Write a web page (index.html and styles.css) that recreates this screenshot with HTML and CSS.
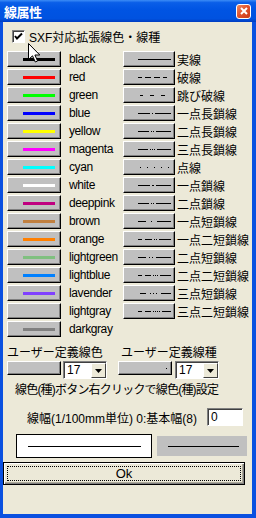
FILE: index.html
```html
<!DOCTYPE html>
<html lang="ja">
<head>
    <meta charset="UTF-8">
    <title>線属性</title>
    <link rel="stylesheet" href="styles.css">
</head>
<body>
    <div class="window">
        <div class="titlebar">
            <span class="title">線属性</span>
            <span class="close">
                <svg width="8" height="8" viewBox="0 0 8 8"><path d="M1 1 L7 7 M7 1 L1 7" stroke="#fff" stroke-width="2"/></svg>
            </span>
        </div>
        <div class="body">
            <div class="check-row">
                <span class="checkbox">
                    <svg width="9" height="9" viewBox="0 0 9 9"><path d="M1 4 L3 6.5 L8 1.5" fill="none" stroke="#000" stroke-width="2"/></svg>
                </span>
                <span>SXF対応拡張線色・線種</span>
            </div>

            <div class="lists">
                <!-- colour buttons -->
                <div class="colors">
                    <div class="row"><button class="btn color-btn"><span class="swatch" style="background:#000000"></span></button><span class="name">black</span></div>
                    <div class="row"><button class="btn color-btn"><span class="swatch" style="background:#ff0000"></span></button><span class="name">red</span></div>
                    <div class="row"><button class="btn color-btn"><span class="swatch" style="background:#00ff00"></span></button><span class="name">green</span></div>
                    <div class="row"><button class="btn color-btn"><span class="swatch" style="background:#0000ff"></span></button><span class="name">blue</span></div>
                    <div class="row"><button class="btn color-btn"><span class="swatch" style="background:#ffff00"></span></button><span class="name">yellow</span></div>
                    <div class="row"><button class="btn color-btn"><span class="swatch" style="background:#ff00ff"></span></button><span class="name">magenta</span></div>
                    <div class="row"><button class="btn color-btn"><span class="swatch" style="background:#00ffff"></span></button><span class="name">cyan</span></div>
                    <div class="row"><button class="btn color-btn"><span class="swatch" style="background:#ffffff"></span></button><span class="name">white</span></div>
                    <div class="row"><button class="btn color-btn"><span class="swatch" style="background:#c00080"></span></button><span class="name">deeppink</span></div>
                    <div class="row"><button class="btn color-btn"><span class="swatch" style="background:#c08040"></span></button><span class="name">brown</span></div>
                    <div class="row"><button class="btn color-btn"><span class="swatch" style="background:#ff8000"></span></button><span class="name">orange</span></div>
                    <div class="row"><button class="btn color-btn"><span class="swatch" style="background:#80c080"></span></button><span class="name">lightgreen</span></div>
                    <div class="row"><button class="btn color-btn"><span class="swatch" style="background:#0080ff"></span></button><span class="name">lightblue</span></div>
                    <div class="row"><button class="btn color-btn"><span class="swatch" style="background:#8040ff"></span></button><span class="name">lavender</span></div>
                    <div class="row"><button class="btn color-btn"><span class="swatch" style="background:#c0c0c0"></span></button><span class="name">lightgray</span></div>
                    <div class="row"><button class="btn color-btn"><span class="swatch" style="background:#808080"></span></button><span class="name">darkgray</span></div>
                </div>

                <!-- line type buttons -->
                <div class="types">
                    <div class="row"><button class="btn type-btn"><svg width="33" height="1"><line x1="0" y1="0.5" x2="33" y2="0.5"/></svg></button><span class="name">実線</span></div>
                    <div class="row"><button class="btn type-btn"><svg width="33" height="1"><line x1="0" y1="0.5" x2="33" y2="0.5" stroke-dasharray="4 3 6 3 6 3 4"/></svg></button><span class="name">破線</span></div>
                    <div class="row"><button class="btn type-btn"><svg width="33" height="1"><line x1="0" y1="0.5" x2="33" y2="0.5" stroke-dasharray="3 7 4 7 4 6 2" stroke-dashoffset="-2"/></svg></button><span class="name">跳び破線</span></div>
                    <div class="row"><button class="btn type-btn"><svg width="33" height="1"><line x1="0" y1="0.5" x2="33" y2="0.5" stroke-dasharray="12 2 1 2 16"/></svg></button><span class="name">一点長鎖線</span></div>
                    <div class="row"><button class="btn type-btn"><svg width="33" height="1"><line x1="0" y1="0.5" x2="33" y2="0.5" stroke-dasharray="11 2 1 1 1 2 15"/></svg></button><span class="name">二点長鎖線</span></div>
                    <div class="row"><button class="btn type-btn"><svg width="33" height="1"><line x1="0" y1="0.5" x2="33" y2="0.5" stroke-dasharray="10 2 1 1 1 1 1 2 14"/></svg></button><span class="name">三点長鎖線</span></div>
                    <div class="row"><button class="btn type-btn"><svg width="33" height="1"><line x1="0" y1="0.5" x2="33" y2="0.5" stroke-dasharray="1 6" stroke-dashoffset="-2"/></svg></button><span class="name">点線</span></div>
                    <div class="row"><button class="btn type-btn"><svg width="33" height="1"><line x1="0" y1="0.5" x2="33" y2="0.5" stroke-dasharray="12 2 2 2 15"/></svg></button><span class="name">一点鎖線</span></div>
                    <div class="row"><button class="btn type-btn"><svg width="33" height="1"><line x1="0" y1="0.5" x2="33" y2="0.5" stroke-dasharray="11 2 1 1 1 2 15"/></svg></button><span class="name">二点鎖線</span></div>
                    <div class="row"><button class="btn type-btn"><svg width="33" height="1"><line x1="0" y1="0.5" x2="33" y2="0.5" stroke-dasharray="8 5 1 5 14"/></svg></button><span class="name">一点短鎖線</span></div>
                    <div class="row"><button class="btn type-btn"><svg width="33" height="1"><line x1="0" y1="0.5" x2="33" y2="0.5" stroke-dasharray="4 3 7 2 1 1 1 2 12"/></svg></button><span class="name">一点二短鎖線</span></div>
                    <div class="row"><button class="btn type-btn"><svg width="33" height="1"><line x1="0" y1="0.5" x2="33" y2="0.5" stroke-dasharray="8 3 1 2 1 3 15"/></svg></button><span class="name">二点短鎖線</span></div>
                    <div class="row"><button class="btn type-btn"><svg width="33" height="1"><line x1="0" y1="0.5" x2="33" y2="0.5" stroke-dasharray="4 3 6 2 1 1 1 1 1 2 12"/></svg></button><span class="name">二点二短鎖線</span></div>
                    <div class="row"><button class="btn type-btn"><svg width="33" height="1"><line x1="0" y1="0.5" x2="33" y2="0.5" stroke-dasharray="6 4 1 2 1 2 1 4 12" stroke-dashoffset="-2"/></svg></button><span class="name">三点短鎖線</span></div>
                    <div class="row"><button class="btn type-btn"><svg width="33" height="1"><line x1="0" y1="0.5" x2="33" y2="0.5" stroke-dasharray="4 3 6 2 1 1 1 1 1 1 1 2 12"/></svg></button><span class="name">三点二短鎖線</span></div>
                </div>
            </div>

            <div class="user-labels">
                <span class="user-label first">ユーザー定義線色</span>
                <span class="user-label">ユーザー定義線種</span>
            </div>
            <div class="user-row">
                <button class="btn user-btn"></button>
                <div class="combo"><span class="combo-value">17</span><span class="combo-arrow"><svg width="7" height="4" viewBox="0 0 7 4"><path d="M0 0 H7 L3.5 4 Z" fill="#000"/></svg></span></div>
                <button class="btn user-btn second"><span class="dot"></span></button>
                <div class="combo"><span class="combo-value">17</span><span class="combo-arrow"><svg width="7" height="4" viewBox="0 0 7 4"><path d="M0 0 H7 L3.5 4 Z" fill="#000"/></svg></span></div>
            </div>

            <div class="note">線色(種)ボタン右クリックで線色(種)設定</div>

            <div class="width-row">
                <span>線幅(1/100mm単位) 0:基本幅(8)</span>
                <div class="edit">0</div>
            </div>

            <div class="preview-row">
                <div class="preview white"><span class="preview-line"></span></div>
                <div class="preview gray"><span class="preview-line"></span></div>
            </div>

            <button class="ok-btn"><span class="focus">Ok</span></button>
        </div>

        <!-- mouse pointer over the checkbox -->
        <svg class="cursor" width="13" height="20" viewBox="0 0 13 20">
            <path d="M0.5 0.5 L0.5 16.5 L4.5 12.8 L7.3 19 L9.6 18 L6.9 12 L11.8 12 Z" fill="#fff" stroke="#000" stroke-width="1"/>
        </svg>
    </div>
</body>
</html>
```

FILE: styles.css
```css
body { margin: 0; font-family: "Liberation Sans", "Noto Sans CJK JP", sans-serif; font-size: 12px; color: #000; }
.window { position: relative; width: 256px; height: 518px; display: flex; flex-direction: column; background: #ece9d8; }

/* title bar */
.titlebar { height: 22px; flex: none; display: flex; align-items: center; justify-content: space-between; padding: 0 5px 0 4px; background: linear-gradient(to bottom, #3c8cf6 0%, #0a5ee8 12%, #0054e3 45%, #0052e0 85%, #003cc0 100%); }
.title { color: #fff; font-weight: bold; font-size: 13px; letter-spacing: -0.5px; font-family: "Noto Sans CJK JP", sans-serif; }
.close { width: 13px; height: 13px; display: flex; align-items: center; justify-content: center; border: 1px solid #fff; border-radius: 3px; background: linear-gradient(to bottom right, #f08a60, #e0502a 50%, #c83a18); }

.body { flex: 1; border: solid #0a50e0; border-width: 0 4px 4px 3px; display: flex; flex-direction: column; }

/* checkbox */
.check-row { display: flex; align-items: center; height: 13px; margin: 8px 0 7px 9px; gap: 4px; }
.checkbox { width: 13px; height: 13px; box-sizing: border-box; display: flex; align-items: center; justify-content: center; background: #fff; border: 1px solid; border-color: #808080 #fff #fff #808080; box-shadow: inset 1px 1px #404040; }

/* button lists */
.lists { display: flex; padding-left: 4px; }
.colors { width: 116px; }
.row { height: 18px; display: flex; align-items: center; }
.name { white-space: nowrap; }
.colors .name { margin-left: 8px; letter-spacing: -0.4px; }
.types .name { margin-left: 2px; }

.btn { box-sizing: border-box; height: 16px; padding: 0; margin: 0; display: flex; align-items: center; justify-content: flex-end; background: #c0c0c0; border: 1px solid; border-color: #fff #000 #000 #fff; box-shadow: inset -1px -1px #808080; }
.color-btn { width: 54px; padding-right: 5px; }
.swatch { width: 32px; height: 3px; }
.type-btn { width: 52px; padding-right: 3px; }
.type-btn svg line { stroke: #000; stroke-width: 1; }

/* user defined */
.user-labels { display: flex; height: 14px; line-height: 14px; margin-top: 8px; }
.user-label { white-space: nowrap; }
.user-label.first { width: 114px; padding-left: 4px; }
.user-row { display: flex; align-items: flex-start; padding-left: 4px; margin-top: 1px; }
.user-btn { width: 54px; height: 14px; }
.user-btn.second { margin-left: 11px; padding-right: 4px; }
.dot { width: 1px; height: 1px; background: #000; }
.combo { box-sizing: border-box; width: 44px; height: 18px; margin-left: 2px; display: flex; background: #fff; border: 1px solid; border-color: #808080 #fff #fff #808080; box-shadow: inset 1px 1px #404040; }
.user-btn.second + .combo { margin-left: 3px; }
.combo-value { flex: 1; padding: 1px 0 0 3px; font-size: 12px; }
.combo-arrow { width: 15px; margin: 1px 0 0 0; box-sizing: border-box; display: flex; align-items: center; justify-content: center; background: #ece9d8; border: 1px solid; border-color: #fff #404040 #404040 #fff; }

.note { margin-top: 4px; padding-left: 12px; line-height: 14px; white-space: nowrap; letter-spacing: -0.8px; }

.width-row { display: flex; align-items: center; height: 18px; margin-top: 11px; padding-left: 24px; white-space: nowrap; }
.edit { box-sizing: border-box; width: 36px; height: 18px; margin-left: auto; margin-right: 9px; padding: 1px 0 0 3px; background: #fff; border: 1px solid; border-color: #808080 #fff #fff #808080; box-shadow: inset 1px 1px #404040; }

/* preview */
.preview-row { display: flex; align-items: center; margin-top: 8px; padding-left: 13px; }
.preview { box-sizing: border-box; display: flex; align-items: center; }
.preview.white { width: 136px; height: 24px; background: #fff; border: 1px solid #000; padding-left: 11px; }
.preview.white .preview-line { width: 113px; }
.preview.gray { width: 90px; height: 20px; margin-left: 5px; background: #c0c0c0; padding-left: 11px; }
.preview.gray .preview-line { width: 71px; }
.preview-line { height: 1px; background: #000; }

/* ok button */
.ok-btn { box-sizing: border-box; width: 242px; height: 23px; margin-top: 4px; padding: 3px; display: flex; background: #ece9d8; border: 1px solid #000; box-shadow: inset 1px 1px #fff, inset -1px -1px #808080, inset -2px -2px #aca899; font-family: "Liberation Sans", sans-serif; font-size: 13px; }
.focus { flex: 1; display: flex; align-items: center; justify-content: center; border: 1px dotted #000; }

.cursor { position: absolute; left: 28px; top: 43px; }
```
